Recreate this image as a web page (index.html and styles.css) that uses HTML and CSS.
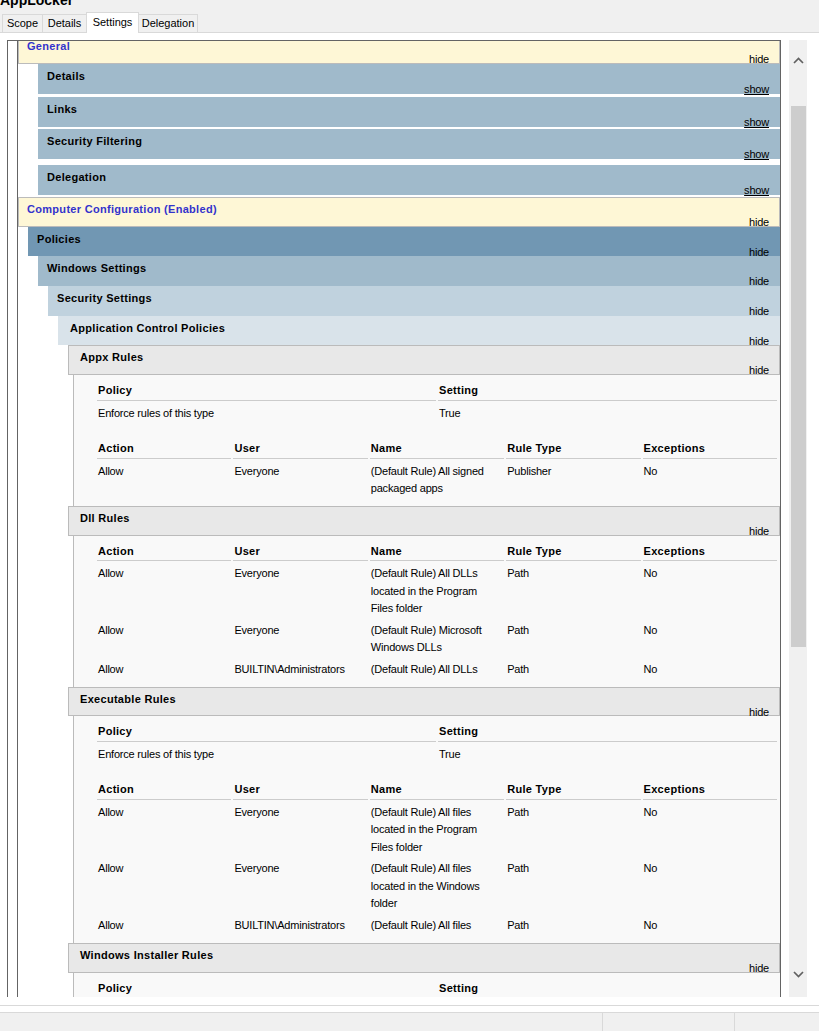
FILE: index.html
```
<!DOCTYPE html>
<html>
<head>
<meta charset="utf-8">
<title>AppLocker</title>
<link rel="stylesheet" href="styles.css">
</head>
<body>
<div class="title">AppLocker</div>
<div class="tabs">
  <div class="tab w-scope">Scope</div>
  <div class="tab w-details">Details</div>
  <div class="tab sel w-settings">Settings</div>
  <div class="tab w-deleg">Delegation</div>
</div>
<div class="tabpage">
  <div class="viewrow">
    <div class="viewer">
      <div class="report">
        <div class="hd he0 gen"><span class="t">General</span><span class="x">hide</span></div>
        <div class="hd he1c m3"><span class="t">Details</span><span class="x show">show</span></div>
        <div class="hd he1c m3"><span class="t">Links</span><span class="x show">show</span></div>
        <div class="hd he1c m6"><span class="t">Security Filtering</span><span class="x show">show</span></div>
        <div class="hd he1c m2"><span class="t">Delegation</span><span class="x show">show</span></div>

        <div class="hd he0"><span class="t">Computer Configuration (Enabled)</span><span class="x">hide</span></div>
        <div class="hd he1h"><span class="t">Policies</span><span class="x">hide</span></div>
        <div class="hd he1"><span class="t">Windows Settings</span><span class="x">hide</span></div>
        <div class="hd he2"><span class="t">Security Settings</span><span class="x">hide</span></div>
        <div class="hd he3"><span class="t">Application Control Policies</span><span class="x">hide</span></div>

        <div class="hd he4"><span class="t">Appx Rules</span><span class="x">hide</span></div>
        <div class="body">
          <table>
            <tr><th>Policy</th><th>Setting</th></tr>
            <tr><td>Enforce rules of this type</td><td>True</td></tr>
          </table>
          <table>
            <tr><th>Action</th><th>User</th><th>Name</th><th>Rule Type</th><th>Exceptions</th></tr>
            <tr><td>Allow</td><td>Everyone</td><td>(Default Rule) All signed packaged apps</td><td>Publisher</td><td>No</td></tr>
          </table>
        </div>

        <div class="hd he4"><span class="t">Dll Rules</span><span class="x">hide</span></div>
        <div class="body">
          <table>
            <tr><th>Action</th><th>User</th><th>Name</th><th>Rule Type</th><th>Exceptions</th></tr>
            <tr><td>Allow</td><td>Everyone</td><td>(Default Rule) All DLLs located in the Program Files folder</td><td>Path</td><td>No</td></tr>
            <tr><td>Allow</td><td>Everyone</td><td>(Default Rule) Microsoft Windows DLLs</td><td>Path</td><td>No</td></tr>
            <tr><td>Allow</td><td>BUILTIN\Administrators</td><td>(Default Rule) All DLLs</td><td>Path</td><td>No</td></tr>
          </table>
        </div>

        <div class="hd he4"><span class="t">Executable Rules</span><span class="x">hide</span></div>
        <div class="body">
          <table>
            <tr><th>Policy</th><th>Setting</th></tr>
            <tr><td>Enforce rules of this type</td><td>True</td></tr>
          </table>
          <table>
            <tr><th>Action</th><th>User</th><th>Name</th><th>Rule Type</th><th>Exceptions</th></tr>
            <tr><td>Allow</td><td>Everyone</td><td>(Default Rule) All files located in the Program Files folder</td><td>Path</td><td>No</td></tr>
            <tr><td>Allow</td><td>Everyone</td><td>(Default Rule) All files located in the Windows folder</td><td>Path</td><td>No</td></tr>
            <tr><td>Allow</td><td>BUILTIN\Administrators</td><td>(Default Rule) All files</td><td>Path</td><td>No</td></tr>
          </table>
        </div>

        <div class="hd he4"><span class="t">Windows Installer Rules</span><span class="x">hide</span></div>
        <div class="body tail">
          <table>
            <tr><th>Policy</th><th>Setting</th></tr>
          </table>
        </div>
      </div>
    </div>
    <div class="scroll">
      <div class="sbtn up"><svg width="11" height="7" viewBox="0 0 11 7"><polyline points="1,6 5.5,1.5 10,6" fill="none" stroke="#606060" stroke-width="1.7"/></svg></div>
      <div class="track"><div class="thumb"></div></div>
      <div class="sbtn down"><svg width="11" height="7" viewBox="0 0 11 7"><polyline points="1,1 5.5,5.5 10,1" fill="none" stroke="#606060" stroke-width="1.7"/></svg></div>
    </div>
  </div>
</div>
<div class="band"></div>
<div class="status">
  <div class="cell c1"></div>
  <div class="cell c2"></div>
  <div class="cell c3"></div>
</div>
</body>
</html>
```
FILE: styles.css
```
html, body {
  margin: 0;
  padding: 0;
}
body {
  background: #f0f0f0;
  font-family: "Liberation Sans", Arial, sans-serif;
  color: #000;
  overflow: hidden;
  height: 1031px;
}

.title {
  margin-top: -8px;
  height: 16px;
  font-size: 14px;
  line-height: 16px;
  font-weight: bold;
}

.tabs {
  position: relative;
  z-index: 1;
  display: flex;
  align-items: flex-end;
  height: 20px;
  margin-top: 4px;
  padding-left: 2px;
}
.tab {
  box-sizing: border-box;
  height: 18px;
  border: 1px solid #d9d9d9;
  border-bottom: none;
  background: #f0f0f0;
  font-size: 11px;
  line-height: 17px;
  text-align: center;
  margin-left: -1px;
}
.tab.w-scope { width: 41px; margin-left: 0; }
.tab.w-details { width: 45px; }
.tab.w-settings { width: 53px; }
.tab.w-deleg { width: 60px; }
.tab.sel {
  height: 21px;
  line-height: 19px;
  background: #fff;
  margin-bottom: -1px;
}

.tabpage {
  background: #fff;
  border-top: 1px solid #d9d9d9;
  border-bottom: 1px solid #d9d9d9;
  padding: 7px 0 8px 7px;
}
.viewrow {
  display: flex;
  height: 957px;
}
.viewer {
  box-sizing: border-box;
  width: 774px;
  border: 1px solid #646464;
  border-bottom: none;
  overflow: hidden;
  background: #fff;
}

.scroll {
  width: 18px;
  margin-left: 8px;
  background: #f0f0f0;
  display: flex;
  flex-direction: column;
}
.sbtn {
  height: 17px;
  display: flex;
  align-items: center;
  justify-content: center;
}
.sbtn.up { margin-top: 12px; }
.sbtn.down { margin-bottom: 14px; }
.track {
  flex: 1;
  display: flex;
  flex-direction: column;
  align-items: center;
}
.thumb {
  width: 15px;
  height: 541px;
  margin-top: 37px;
  background: #cdcdcd;
}

.band {
  height: 6px;
  background: #fff;
}
.status {
  display: flex;
  height: 30px;
  border-top: 1px solid #d9d9d9;
  background: #f0f0f0;
}
.cell.c1 { width: 602px; border-right: 1px solid #d9d9d9; }
.cell.c2 { width: 131px; border-right: 1px solid #d9d9d9; }
.cell.c3 { flex: 1; }

/* report */
.report {
  margin: -7px 0 0 9px;
  border-left: 1px solid #646464;
  font-size: 11px;
  letter-spacing: -0.2px;
}
.hd {
  box-sizing: border-box;
  height: 29.67px;
  border: 1px solid transparent;
  padding: 3px 10px 0 8px;
  display: flex;
  flex-direction: column;
  font-weight: bold;
  letter-spacing: 0.3px;
}
.hd .t {
  line-height: 16px;
  white-space: nowrap;
}
.hd .x {
  margin-top: auto;
  align-self: flex-end;
  line-height: 10px;
  font-weight: normal;
  letter-spacing: -0.2px;
  color: #000;
}
.hd .x.show { text-decoration: underline; }

.he0 {
  background: #fef7d6;
  border-color: #bbbbbb;
  color: #3333cc;
}
.he0.gen { height: 30px; }
.he1c {
  height: 30px;
  margin-left: 20px;
  background: #a0bacb;
}
.he1c.m3 { margin-bottom: 2.67px; }
.he1c.m6 { margin-bottom: 5.67px; }
.he1c.m2 { margin-bottom: 2.17px; }
.he1h {
  margin-left: 10px;
  background: #7197b3;
}
.he1 {
  margin-left: 20px;
  background: #a0bacb;
}
.he2 {
  margin-left: 30px;
  background: #c0d2de;
}
.he3 {
  margin-left: 40px;
  background: #d9e3ea;
  padding-left: 11px;
}
.he4 {
  margin-left: 50px;
  background: #e8e8e8;
  border-color: #bbbbbb;
  padding-left: 11px;
}

.body {
  margin-left: 55px;
  border-left: 1px solid #bbbbbb;
  background: #f9f9f9;
  padding: 5px 1px 6.5px 21px;
}
.body.tail {
  padding-bottom: 60px;
}
.body table {
  width: 100%;
  table-layout: fixed;
  border-collapse: separate;
  border-spacing: 2px;
}
.body table + table { margin-top: 14px; }
.body th {
  text-align: left;
  font-weight: bold;
  letter-spacing: 0.3px;
  border-bottom: 1px solid #cccccc;
  padding: 0 9px 0 1px;
  line-height: 17.5px;
  vertical-align: top;
}
.body td {
  padding: 2px 9px 0 1px;
  line-height: 17.5px;
  vertical-align: top;
}
```
